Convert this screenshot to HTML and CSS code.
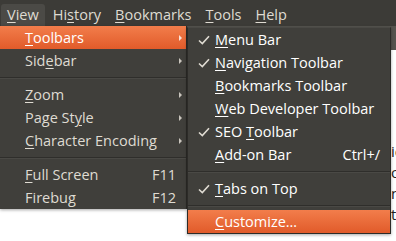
FILE: index.html
```html
<!DOCTYPE html>
<html>
<head>
  <title>View menu</title>
  <meta charset="UTF-8">
  <link rel="stylesheet" href="styles.css">
</head>
<body>
  <div class="menubar">
    <span class="top-item open"><u>V</u>iew</span>
    <span class="top-item">Hi<u>s</u>tory</span>
    <span class="top-item"><u>B</u>ookmarks</span>
    <span class="top-item"><u>T</u>ools</span>
    <span class="top-item"><u>H</u>elp</span>
  </div>

  <div class="page">
    <div class="nav-strip"></div>
    <div class="article">
      <p>io</p>
      <p>op</p>
      <p>ne</p>
      <p>to</p>
    </div>
  </div>

  <div class="menu view-menu">
    <div class="item active has-sub"><span class="label"><u>T</u>oolbars</span><span class="arrow"></span>
      <div class="menu sub-menu">
        <div class="item"><span class="check on"></span><span class="label"><u>M</u>enu Bar</span></div>
        <div class="item"><span class="check on"></span><span class="label"><u>N</u>avigation Toolbar</span></div>
        <div class="item"><span class="check"></span><span class="label"><u>B</u>ookmarks Toolbar</span></div>
        <div class="item"><span class="check"></span><span class="label"><u>W</u>eb Developer Toolbar</span></div>
        <div class="item"><span class="check on"></span><span class="label">SEO <u>T</u>oolbar</span></div>
        <div class="item"><span class="check"></span><span class="label"><u>A</u>dd-on Bar</span><span class="accel">Ctrl+/</span></div>
        <div class="sep"></div>
        <div class="item"><span class="check on"></span><span class="label"><u>T</u>abs on Top</span></div>
        <div class="sep short"></div>
        <div class="item active"><span class="check"></span><span class="label"><u>C</u>ustomize…</span></div>
      </div>
    </div>
    <div class="item has-sub"><span class="label">Sid<u>e</u>bar</span><span class="arrow"></span></div>
    <div class="sep"></div>
    <div class="item has-sub"><span class="label"><u>Z</u>oom</span><span class="arrow"></span></div>
    <div class="item has-sub"><span class="label">Page St<u>y</u>le</span><span class="arrow"></span></div>
    <div class="item has-sub"><span class="label"><u>C</u>haracter Encoding</span><span class="arrow"></span></div>
    <div class="sep"></div>
    <div class="item"><span class="label"><u>F</u>ull Screen</span><span class="accel">F11</span></div>
    <div class="item"><span class="label">Firebug</span><span class="accel">F12</span></div>
  </div>
</body>
</html>
```

FILE: styles.css
```css
html {
  height: 100%;
}
body {
  margin: 0;
  height: 100%;
  min-height: 241px;
  position: relative;
  overflow: hidden;
  background: #fff;
  font-family: "Open Sans", "DejaVu Sans", sans-serif;
  font-size: 14.5px;
  color: #dfdbd2;
}
u {
  text-decoration: underline;
  text-underline-offset: 2px;
  text-decoration-thickness: 1px;
}
.menubar {
  display: flex;
  height: 26px;
  padding: 0 0 0 1px;
  background: #3c3b37;
}
.top-item {
  padding: 0 6px;
  margin-right: 2px;
  margin-top: 4px;
  line-height: 22px;
  border-radius: 3px 3px 0 0;
}
.top-item.open {
  background: #4b4a46;
}
.page {
  color: #222;
}
.nav-strip {
  height: 24px;
  background: #56544f;
}
.article {
  padding: 91px 0 0 391px;
}
.article p {
  margin: 0;
  line-height: 21px;
  font-size: 15px;
}

/* menus */
.menu {
  position: absolute;
  background: #403f3b;
  box-shadow: 0 1px 3px rgba(0, 0, 0, 0.35);
}
.view-menu {
  top: 26px;
  left: 0;
  width: 186px;
  border-right: 1px solid #2c2b28;
}
.sub-menu {
  top: 1px;
  left: 187px;
  width: 202px;
  border: 1px solid #2c2b28;
  border-top-color: #4a4945;
}
.item {
  position: relative;
  display: flex;
  align-items: center;
  height: 23px;
  padding: 0 10px 0 25px;
  white-space: nowrap;
}
.sub-menu .item {
  padding-left: 8px;
  padding-right: 10px;
}
.item.active {
  background: linear-gradient(#f27d4b, #e15b2a);
  color: #fff;
}
.label {
  flex: 1;
}
.accel {
  margin-left: 12px;
}
.arrow {
  width: 0;
  height: 0;
  margin-right: -6px;
  border-top: 3px solid transparent;
  border-bottom: 3px solid transparent;
  border-left: 3px solid #c9c5bd;
}
.item.active > .arrow {
  border-left-color: #fbe3d8;
}
.check {
  width: 19px;
  height: 12px;
}
.check.on {
  background: no-repeat 2px 1px / 12px 10px
    url("data:image/svg+xml,%3Csvg xmlns='http://www.w3.org/2000/svg' viewBox='0 0 12 10'%3E%3Cpath d='M1 5.5 L4.3 8.6 L11 1.2' fill='none' stroke='%23dfdbd2' stroke-width='1.6'/%3E%3C/svg%3E");
}
.sep {
  height: 11px;
  display: flex;
  align-items: center;
}
.sep::before {
  content: "";
  flex: 1;
  height: 1px;
  background: #2f2e2b;
  box-shadow: 0 1px 0 #4a4945;
}
.sep.short {
  height: 10px;
}
```
